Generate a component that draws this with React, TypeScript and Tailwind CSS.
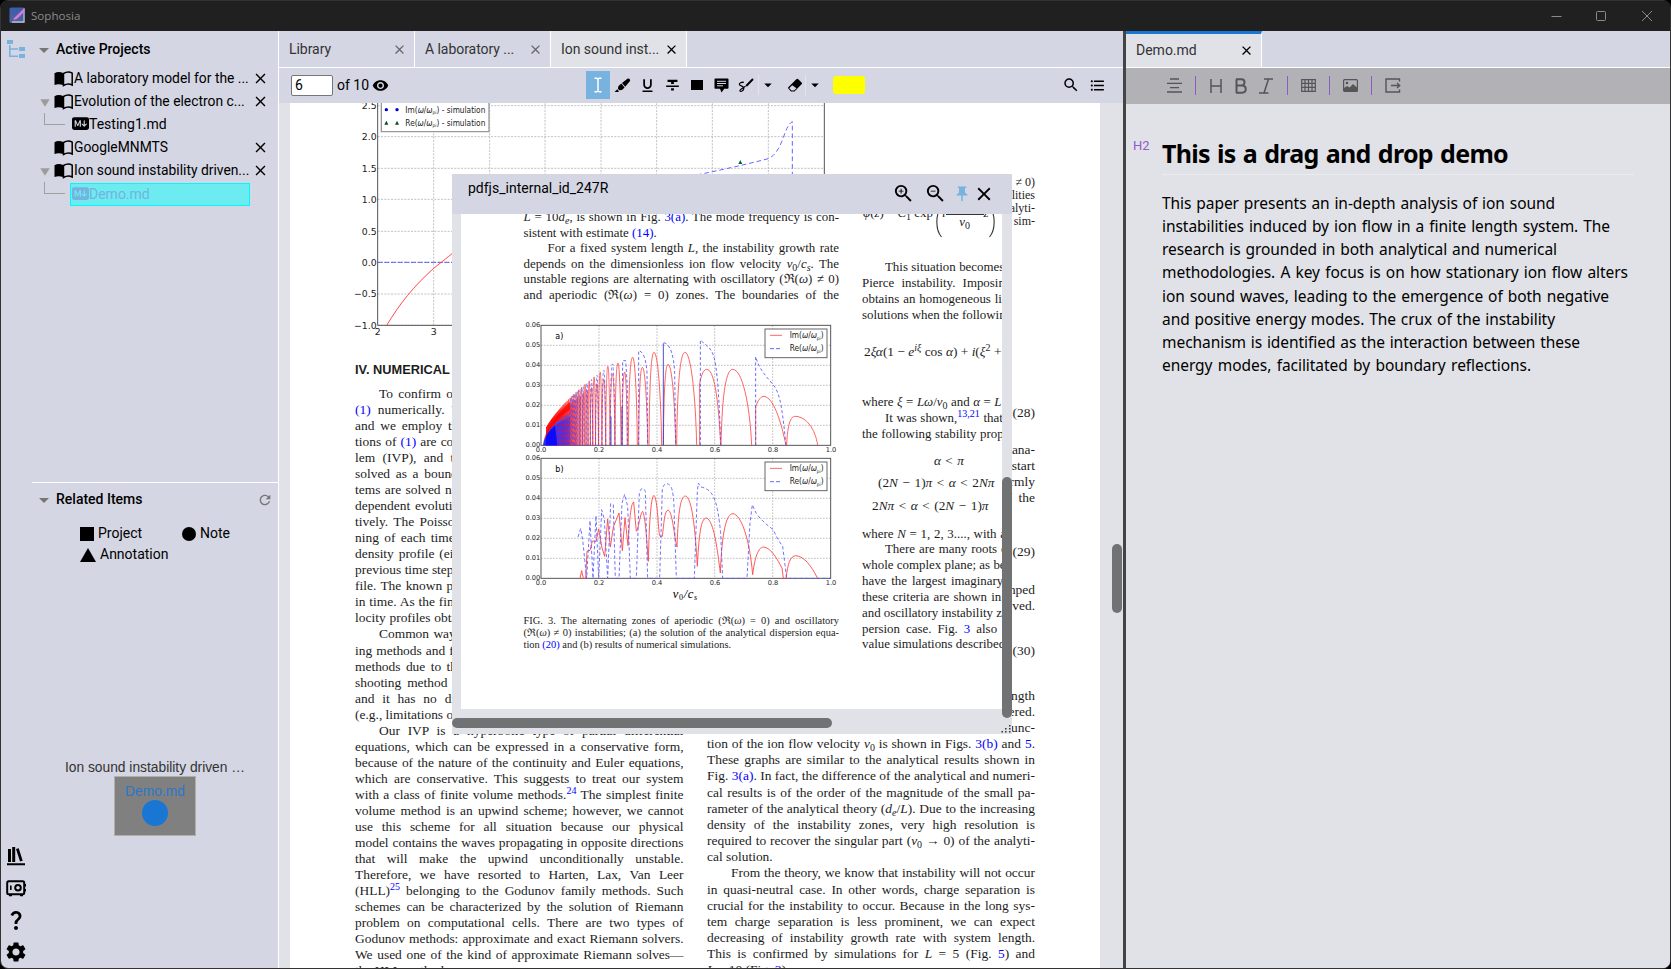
import React from "react";
import { BsMarkdownFill } from "react-icons/bs";
import {
  MdArrowDropDown,
  MdClose,
  MdFormatListBulleted,
  MdFormatStrikethrough,
  MdFormatUnderlined,
  MdPushPin,
  MdQuestionMark,
  MdRefresh,
  MdSearch,
  MdSettings,
  MdVisibility,
  MdZoomIn,
  MdZoomOut,
} from "react-icons/md";

type Kids = { children?: React.ReactNode };

/* ---------- icons ---------- */

const TreeIcon = () => (
  <svg width="20" height="20" viewBox="0 0 20 20" className="text-[#78b2de]" fill="currentColor">
    <path d="M1 1h6v4H1zM13 8h6v4h-6zM13 15h6v4h-6zM3 6h1.6v3.2H12v1.6H4.600v5.600H12V18H3z" />
  </svg>
);

const BookIcon = () => (
  <svg width="19" height="16" viewBox="0 0 19 16" className="shrink-0">
    <path d="M.5 2.200C3 .6 6.500.6 9.500 2.200v12C6.500 12.900 3 12.900.500 14z" fill="#000" />
    <path d="M9.500 2.500c3-1.700 6.300-1.700 8.700-.3V14c-2.400-1.200-5.700-1.200-8.700.5z" fill="none" stroke="#000" strokeWidth="1.500" />
  </svg>
);

const LibraryIcon = () => (
  <svg width="20" height="20" viewBox="0 0 20 20">
    <path d="M2 3h3v13H2zM6.200 1h3v15h-3zM10 3l2.700-.8 4 12.600-2.700.8zM1 17.200h18v2H1z" fill="#000" />
  </svg>
);

const SafeIcon = () => (
  <svg width="20" height="17" viewBox="0 0 20 17" fill="none" stroke="#000" strokeWidth="2">
    <rect x="1.200" y="1.200" width="17" height="13" rx="1.500" />
    <circle cx="12" cy="7.700" r="2.800" />
    <path d="M4.800 5.500v4.500" strokeWidth="1.600" />
    <path d="M3 15.500h3M14 15.500h3M19.500 4v2.500M19.500 9v2.500" strokeWidth="1.500" />
  </svg>
);

const CaretIcon = () => (
  <svg width="8" height="16" viewBox="0 0 8 16" fill="none" stroke="#fff" strokeWidth="1.500">
    <path d="M.5 1.200h2.300L4 2l1.200-.8h2.300M4 2v12M.5 14.800h2.300L4 14l1.200.8h2.300" />
  </svg>
);

const MarkerIcon = () => (
  <svg width="17" height="15" viewBox="0 0 17 15">
    <path d="M13.700.600 8 5 11.200 8.800 16 3c.7-1.300-1-3-2.300-2.400zM7.300 5.600 4.300 8.300 4 10.800l1.300 1.500L8 12l2.600-2.600zM3.300 11.300.5 14h3.700l.7-.8z" fill="#000" />
  </svg>
);

const CommentIcon = () => (
  <svg width="15" height="15" viewBox="0 0 15 15">
    <path d="M1.500.5h12c.6 0 1 .4 1 1v8.300c0 .6-.4 1-1 1H10.300L7.500 14.500 6 10.800H1.500c-.6 0-1-.4-1-1V1.500c0-.6.4-1 1-1z" fill="#000" />
    <path d="M3 3.300h9M3 5.500h9M3 7.800h6" stroke="#d4d6e3" />
  </svg>
);

const DrawIcon = () => (
  <svg width="16" height="15" viewBox="0 0 16 15" fill="none" stroke="#000">
    <path d="M15 1 8.200 8" strokeWidth="2" />
    <path d="M5.800 4.300C3.500 4 .8 5 1.500 6.700c.6 1.400 4.300 1.300 4.300 3.600C5.800 12.800 2.500 14.300 2 12.800c-.4-1.400 2.300-2.300 5.500-4.500" strokeWidth="1.300" />
  </svg>
);

const EraserIcon = () => (
  <svg width="16" height="15" viewBox="0 0 16 15">
    <path d="M9.600 1 1.300 9.200a1 1 0 0 0 0 1.400L4 13.500h3.500l7.300-7.400a1 1 0 0 0 0-1.400L11 1a1 1 0 0 0-1.400 0z" fill="#000" />
    <path d="M5.200 7.300 2.200 10.200l2.400 2.400H7l2.500-2.400z" fill="#d4d6e3" />
  </svg>
);

const AppLogo = () => (
  <svg width="17" height="17" viewBox="0 0 17 17">
    <defs>
      <linearGradient id="logo" x1="0" y1="0" x2="0" y2="1">
        <stop offset="0" stopColor="#3a5cab" />
        <stop offset="1" stopColor="#56639a" />
      </linearGradient>
    </defs>
    <rect x=".5" y=".5" width="15" height="15.500" rx="1.500" fill="url(#logo)" />
    <path d="M15 1.500v13.500H3" stroke="#b9bcd6" strokeWidth="1.300" fill="none" />
    <path d="M15.500 1 4.500 11.500 5 13l3.500-1.500L15 5z" fill="#cf7fd8" />
  </svg>
);

/* ---------- left side ---------- */

const Rail = () => (
  <nav className="flex w-[31px] shrink-0 flex-col items-center justify-between pr-px pt-[8px]">
    <TreeIcon />
    <div className="flex flex-col items-center">
      <div className="flex h-8 items-center"><LibraryIcon /></div>
      <div className="flex h-8 items-center"><SafeIcon /></div>
      <div className="flex h-8 items-center"><MdQuestionMark size={24} /></div>
      <div className="flex h-8 items-center"><MdSettings size={24} /></div>
    </div>
  </nav>
);

const PanelTitle = ({ children, right }: Kids & { right?: React.ReactNode }) => (
  <div className="flex h-[35px] items-center pr-[5px]">
    <span className="flex w-6 justify-center text-[#757575]"><MdArrowDropDown size={24} className="shrink-0" /></span>
    <span className="flex-1 text-[14px] font-medium text-black">{children}</span>
    {right}
  </div>
);

const ProjectRow = ({ label, open }: { label: string; open?: boolean }) => (
  <div className="flex h-[23px] items-center pl-[8px]">
    <span className="w-[14px] shrink-0">
      {open && (
        <svg width="10" height="8" viewBox="0 0 10 8" className="mt-[3px]"><path d="M.3.300h9.400L5 7.800z" fill="#9c9c9c" /></svg>
      )}
    </span>
    <BookIcon />
    <span className="w-[176px] shrink-0 whitespace-nowrap pl-[1px] text-[13.850px]">{label}</span>
    <span className="ml-[3px]"><MdClose size={17} /></span>
  </div>
);

const NoteRow = ({ label, active }: { label: string; active?: boolean }) => (
  <div className="flex h-[23px] pl-3">
    <span className="h-3 w-[21px] border-b border-l border-[#a0a0a0]" />
    <span
      className={
        active
          ? "ml-[5px] mt-[1px] flex h-[23px] w-[180px] items-center border border-[#00f8ff] bg-[#6cecf1] pl-[1px] text-[#75b2de]"
          : "ml-[5px] flex w-[180px] items-center pl-[2px]"
      }
    >
      <BsMarkdownFill size={17} className="mb-[2px]" />
      <span className="text-[14px]">{label}</span>
    </span>
  </div>
);

const Sidebar = () => (
  <aside className="flex w-[246px] shrink-0 flex-col text-black">
    <section className="flex h-[451px] flex-col pt-[1px]">
      <PanelTitle>Active Projects</PanelTitle>
      <ProjectRow label="A laboratory model for the ..." />
      <ProjectRow open label="Evolution of the electron c..." />
      <NoteRow label="Testing1.md" />
      <ProjectRow label="GoogleMNMTS" />
      <ProjectRow open label="Ion sound instability driven..." />
      <NoteRow active label="Demo.md" />
    </section>
    <section className="flex flex-1 flex-col border-t border-white">
      <div className="-mt-px"><PanelTitle right={<MdRefresh size={16} className="text-[#757575]" />}>Related Items</PanelTitle></div>
      <div className="grid grid-cols-[102px_1fr] gap-y-[1px] pl-12 pt-[6px] text-[14px] leading-5">
        <span className="flex items-center gap-1">
          <span className="mt-[2px] h-[14px] w-[14px] bg-black" />Project
        </span>
        <span className="flex items-center gap-1">
          <span className="mt-[2px] h-[14px] w-[14px] rounded-full bg-black" />Note
        </span>
        <span className="flex items-center gap-1">
          <svg width="16" height="14" viewBox="0 0 16 14" className="mt-[2px]"><path d="M8 0l8 14H0z" /></svg>
          Annotation
        </span>
      </div>
      <div className="flex flex-col items-center pt-[195px] font-['Liberation_Sans',sans-serif] text-[13.800px] leading-[18px] text-[#333]">
        <span className="whitespace-nowrap">Ion sound instability driven …</span>
        <div className="-mt-px flex h-[60px] w-[82px] flex-col items-center border border-[#b0b0aa] bg-[#808080] pt-[6px] text-[#2a77c9]">
          <span className="leading-[17px]">Demo.md</span>
          <span className="h-[26px] w-[26px] rounded-full bg-[#1976d2]" />
        </div>
      </div>
    </section>
  </aside>
);

/* ---------- document text ---------- */

const J = ({ children, indent }: Kids & { indent?: boolean }) => (
  <div className={indent ? "whitespace-nowrap pl-6 [text-align-last:justify]" : "whitespace-nowrap [text-align-last:justify]"}>{children}</div>
);
const L = ({ children, ws }: Kids & { ws?: number }) => (
  <div className="whitespace-nowrap" style={ws ? { wordSpacing: ws } : undefined}>{children}</div>
);
const R = ({ children }: Kids) => <div className="whitespace-nowrap text-right">{children}</div>;
const A = ({ children }: Kids) => <span className="text-[#0000ff]">{children}</span>;
const Sup = ({ children }: Kids) => <span className="relative -top-[5px] text-[10px] leading-none">{children}</span>;
const Sub = ({ children }: Kids) => <span className="relative top-[3px] text-[10px] leading-none">{children}</span>;

/* growth-rate plot at the top of the page */
const TopPlot = () => {
  const gx = [491, 659, 825, 993, 1160, 1327, 1495];
  const gy: [number, string][] = [[257, "2.5"], [350, "2.0"], [445, "1.5"], [538, "1.0"], [634, "0.5"], [727, "0.0"], [822, "−0.5"], [916, "−1.0"]];
  return (
    <svg width="480" height="236" viewBox="240 249 1440 708" className="block shrink-0 font-['DejaVu_Sans',sans-serif]">
      <g stroke="#b4b4b4" strokeWidth="2.500" strokeDasharray="6 4">
        {gx.map((x) => <path key={x} d={`M${x} 200V916`} />)}
        {gy.map(([y]) => <path key={y} d={`M323 ${y}H1663`} />)}
      </g>
      <path d="M323 200V916H1663V200" fill="none" stroke="#555" strokeWidth="3" />
      <path d="M323 727H900" stroke="#4444ee" strokeWidth="2.500" strokeDasharray="15 5" />
      <path d="M350 916C390 850 430 800 491 745C520 722 535 710 560 690" fill="none" stroke="#ff4a4a" strokeWidth="3" />
      <path d="M1280 465C1400 440 1440 430 1495 416C1540 395 1540 320 1567 305V465" fill="none" stroke="#6666ff" strokeWidth="3" strokeDasharray="14 9" />
      <path d="M1411 420l-6 12h12z" fill="#063" />
      <g fontSize="28" fill="#222" textAnchor="end">
        {gy.map(([y, t]) => <text key={t} x="320" y={y + 10}>{t}</text>)}
      </g>
      <g fontSize="28" fill="#222" textAnchor="middle">
        <text x="323" y="944">2</text>
        <text x="491" y="944">3</text>
      </g>
      <path d="M334 200V335H657V200" fill="#fff" stroke="#999" strokeWidth="4" />
      <g fill="#0000cc"><circle cx="349" cy="269" r="5" /><circle cx="381" cy="269" r="5" /></g>
      <g fill="#005020"><path d="M349 302l-6 12h12zM381 302l-6 12h12z" /></g>
      <g fontSize="24" fill="#222">
        <text x="406" y="278" textLength="240" lengthAdjust="spacingAndGlyphs">Im(<tspan fontStyle="italic">ω</tspan>/<tspan fontStyle="italic">ω</tspan><tspan fontSize="14" dy="5">pi</tspan><tspan dy="-5">) - simulation</tspan></text>
        <text x="406" y="317" textLength="240" lengthAdjust="spacingAndGlyphs">Re(<tspan fontStyle="italic">ω</tspan>/<tspan fontStyle="italic">ω</tspan><tspan fontSize="14" dy="5">pi</tspan><tspan dy="-5">) - simulation</tspan></text>
      </g>
    </svg>
  );
};

const leftColumn = (
  <div className="w-[328.500px]">
    <div className="mb-[8px] whitespace-nowrap font-['Liberation_Sans',sans-serif] text-[12.800px] font-bold leading-[16px]">IV. NUMERICAL SIMULATIONS</div>
    <L ws={2}><span className="pl-6">To confirm our results</span></L>
    <L ws={3.800}><A>(1)</A> numerically. We</L>
    <L ws={2.500}>and we employ the</L>
    <L ws={0.700}>tions of <A>(1)</A> are conver</L>
    <L ws={4}>lem (IVP), and then</L>
    <L ws={2.300}>solved as a boundary</L>
    <L ws={1}>tems are solved numer</L>
    <L ws={1.500}>dependent evolution</L>
    <L ws={2}>tively. The Poisson</L>
    <L ws={2}>ning of each time step</L>
    <L ws={1.500}>density profile (either</L>
    <L ws={0}>previous time step</L>
    <L ws={1}>file. The known pro</L>
    <L ws={0.500}>in time. As the final</L>
    <L ws={0.500}>locity profiles obtain</L>
    <L ws={1}><span className="pl-6">Common ways of</span></L>
    <L ws={0.700}>ing methods and fin</L>
    <L ws={2}>methods due to the</L>
    <L ws={2.500}>shooting method is</L>
    <L ws={4.500}>and it has no difficul</L>
    <L ws={0}>(e.g., limitations on</L>
    <J indent>Our IVP is a hyperbolic type of partial differential</J>
    <J>equations, which can be expressed in a conservative form,</J>
    <J>because of the nature of the continuity and Euler equations,</J>
    <J>which are conservative. This suggests to treat our system</J>
    <J>with a class of finite volume methods.<A><Sup>24</Sup></A> The simplest finite</J>
    <J>volume method is an upwind scheme; however, we cannot</J>
    <J>use this scheme for all situation because our physical</J>
    <J>model contains the waves propagating in opposite directions</J>
    <J>that will make the upwind unconditionally unstable.</J>
    <J>Therefore, we have resorted to Harten, Lax, Van Leer</J>
    <J>(HLL)<A><Sup>25</Sup></A> belonging to the Godunov family methods. Such</J>
    <J>schemes can be characterized by the solution of Riemann</J>
    <J>problem on computational cells. There are two types of</J>
    <J>Godunov methods: approximate and exact Riemann solvers.</J>
    <J>We used one of the kind of approximate Riemann solves—</J>
    <L>the HLL method.</L>
  </div>
);

const rightColumn = (
  <div className="w-[328px]">
    <div className="text-[12px] leading-[12.900px]">
      <R>≠ 0)</R>
      <R>ilities</R>
      <R>alyti-</R>
      <R>sim-</R>
    </div>
    <div className="h-[177px]" />
    <R>(28)</R>
    <div className="h-[21px]" />
    <R>ana-</R>
    <R>start</R>
    <R>rmly</R>
    <R>of&nbsp; the</R>
    <div className="h-[38px]" />
    <R>(29)</R>
    <div className="h-[22px]" />
    <R>mped</R>
    <R>ved.</R>
    <div className="h-[29px]" />
    <R>(30)</R>
    <div className="h-[29px]" />
    <R>length</R>
    <R>considered.</R>
    <R>func-</R>
    <div className="leading-[16.170px]">
      <J>tion of the ion flow velocity <i>v</i><Sub>0</Sub> is shown in Figs. <A>3(b)</A> and <A>5</A>.</J>
      <J>These graphs are similar to the analytical results shown in</J>
      <J>Fig. <A>3(a)</A>. In fact, the difference of the analytical and numeri-</J>
      <J>cal results is of the order of the magnitude of the small pa-</J>
      <J>rameter of the analytical theory (<i>d</i><Sub><i>e</i></Sub>/<i>L</i>). Due to the increasing</J>
      <J>density of the instability zones, very high resolution is</J>
      <J>required to recover the singular part (<i>v</i><Sub>0</Sub> → 0) of the analyti-</J>
      <L>cal solution.</L>
      <J indent>From the theory, we know that instability will not occur</J>
      <J>in quasi-neutral case. In other words, charge separation is</J>
      <J>crucial for the instability to occur. Because in the long sys-</J>
      <J>tem charge separation is less prominent, we can expect</J>
      <J>decreasing of instability growth rate with system length.</J>
      <J>This is confirmed by simulations for <i>L</i> = 5 (Fig. <A>5</A>) and</J>
      <L><i>L</i> = 10 (Fig. <A>3</A>).</L>
    </div>
  </div>
);

const PdfPage = () => (
  <div className="flex h-full w-[810px] flex-col overflow-hidden bg-white font-['Liberation_Serif',serif] text-[13.450px] leading-[16.030px] text-[#1c1c1c]">
    <div className="flex h-full">
      <div className="w-[394px] shrink-0 pl-[60px]">
        <TopPlot />
        <div className="h-[23px]" />
        <div className="pl-[5px]">{leftColumn}</div>
      </div>
      <div className="pl-[23px] pt-[73px]">{rightColumn}</div>
    </div>
  </div>
);

/* ---------- reference preview ---------- */

type Lobe = [number, number, number, number];

const lobePath = ([s, p, top, e]: Lobe) => {
  const h = 736 - top;
  return `M${s} 736C${s + (p - s) * 0.1} ${736 - h * 0.75} ${p - (p - s) * 0.5} ${top} ${p} ${top}C${p + (e - p) * 0.5} ${top} ${e - (e - p) * 0.1} ${736 - h * 0.55} ${e} 736`;
};

const bigLobes: Lobe[] = [
  [830, 855, 649, 923],
  [633, 668, 508, 725],
  [500, 525, 457, 560],
  [460, 474, 493, 497],
  [417, 432, 457, 455],
  [386, 397, 502, 413],
  [355, 368, 472, 382],
  [336, 344, 516, 352],
  [315, 324, 489, 333],
];

const buildSmallLobes = () => {
  const red: Lobe[] = [];
  const blue: Lobe[] = [];
  const toX = (inv: number) => 93 + 869 / inv;
  let inv = 3.92;
  let even = true;
  while (inv < 50) {
    const e = toX(inv);
    const s = toX(inv + 0.27);
    const v = 1 / inv;
    const height = 560 * Math.pow(v, 0.6);
    const top = 736 - height * (even ? 0.87 : 1.0);
    red.push([s, (s + e) / 2, top, e]);
    if (even) blue.push([s, (s + e) / 2, 736 - height * (v > 0.1 ? 0.99 : 0.7), e]);
    inv += 0.28;
    even = !even;
  }
  return { red, blue };
};

const small = buildSmallLobes();

const PlotFrame = ({ letter }: { letter: string }) => (
  <>
    <g stroke="#b4b4b4" strokeWidth="2.500" strokeDasharray="5 4">
      {[267, 441, 614, 788].map((x) => <path key={x} d={`M${x} 376V736`} />)}
      {[436, 496, 556, 616, 676].map((y) => <path key={y} d={`M93 ${y}H962`} />)}
    </g>
    <rect x="93" y="376" width="869" height="360" fill="none" stroke="#555" strokeWidth="3" />
    <g fontSize="20" fill="#222" textAnchor="end">
      {["0.06", "0.05", "0.04", "0.03", "0.02", "0.01", "0.00"].map((t, i) => <text key={t} x="91" y={382 + i * 60}>{t}</text>)}
    </g>
    <g fontSize="20" fill="#222" textAnchor="middle">
      {["0.0", "0.2", "0.4", "0.6", "0.8", "1.0"].map((t, i) => <text key={t} x={93 + i * 174} y="757">{t}</text>)}
    </g>
    <text x="136" y="416" fontSize="24">{letter}</text>
  </>
);

const PlotLegend = () => (
  <>
    <rect x="765" y="387" width="186" height="86" fill="#fff" stroke="#666" strokeWidth="3" />
    <path d="M780 406h36" stroke="#ff6a6a" strokeWidth="3" />
    <path d="M780 446h36" stroke="#6a6aff" strokeWidth="3" strokeDasharray="12 6" />
    <g fontSize="24" fill="#222">
      <text x="839" y="415" textLength="102" lengthAdjust="spacingAndGlyphs">Im(<tspan fontStyle="italic">ω</tspan>/<tspan fontStyle="italic">ω</tspan><tspan fontSize="14" dy="5">pi</tspan><tspan dy="-5">)</tspan></text>
      <text x="839" y="454" textLength="102" lengthAdjust="spacingAndGlyphs">Re(<tspan fontStyle="italic">ω</tspan>/<tspan fontStyle="italic">ω</tspan><tspan fontSize="14" dy="5">pi</tspan><tspan dy="-5">)</tspan></text>
    </g>
  </>
);

const Figure3 = () => (
  <svg width="322" height="288" viewBox="39 360 966 864" className="-ml-px block font-['DejaVu_Sans',sans-serif]">
    <PlotFrame letter="a)" />
    <g fill="none" stroke="#ff4a4a" strokeWidth="2.600">
      {bigLobes.map((l) => <path key={l[0]} d={lobePath(l)} />)}
      <path d="M737 736V620C745 598 753 589 762 589C790 592 812 660 828 736" />
      <path d="M569 736V550C575 520 582 508 590 508C612 508 625 590 632 736" />
    </g>
    <g fill="none" stroke="#ff1a1a" strokeOpacity="0.7" strokeWidth="2.600">
      {small.red.map((l) => <path key={l[0]} d={lobePath(l)} />)}
    </g>
    <g fill="none" stroke="#4a4aff" strokeWidth="2.500" strokeDasharray="9 7">
      <path d="M737 736V470C748 510 770 530 790 555C812 580 818 640 828 736" />
      <path d="M571 736V420C590 438 600 440 610 465C622 500 628 600 632 736" />
      <path d="M386 736V452C398 455 408 470 411 520L413 736" />
      <path d="M336 736L338 482H347L352 560V736" />
      <path d="M461 428C482 432 492 470 494 520L497 736" />
      {small.blue.map((l) => <path key={l[0]} d={lobePath(l)} strokeOpacity="0.8" />)}
    </g>
    <path d="M336 736V620M303 736V650M460 736V430" stroke="#3333cc" strokeWidth="2.600" />
    <path d="M101 736C102 710 125 685 150 665L180 650V736z" fill="#0000ff" fillOpacity="0.25" />
    <path d="M99 736C100 715 115 695 135 676L142 736z" fill="#0000ff" fillOpacity="0.8" />
    <path d="M101 722C108 690 135 645 180 605L180 630C150 646 120 685 101 722z" fill="#ff0000" fillOpacity="0.75" />
    <PlotLegend />
    <g transform="translate(0 399)">
      <PlotFrame letter="b)" />
      <PlotLegend />
    </g>
    <g transform="translate(0 749)" fill="none" strokeWidth="2.600">
      <path stroke="#ff4040" d="M210 386L215 363L220 386H227L231 305L240 302L247 274L258 275L266 238L276 295L284 320L293 208L301 292L310 232L327 190L337 303L345 204L354 288C358 220 362 160 371 157L379 245C386 240 390 190 398 185C406 200 409 260 415 335C418 200 424 140 432 137C444 150 444 250 450 260H457C462 220 463 185 474 181C488 185 492 260 501 292C505 180 512 140 526 139C546 142 556 240 562 350C568 230 576 205 590 205C612 215 622 300 631 370C636 240 650 192 669 192C692 195 718 260 728 375C736 310 748 292 762 292C786 297 802 330 816 355L820 386H828C834 340 840 320 857 318C884 320 904 350 923 386" />
      <path stroke="#5a5aff" strokeDasharray="10 7" d="M204 262L212 236L218 270L230 386L240 213L249 386L258 198L266 386L275 180L283 210L293 386L302 162L310 165L316 386H327L336 160L344 134L353 170L361 386H379L388 130Q396 105 406 125L413 386H449L457 118Q466 90 482 110Q492 125 493 200L499 386H553L562 125L565 100L572 112Q600 116 612 145Q624 170 632 250L638 386H711L720 220L727 165L738 190Q755 215 790 240Q800 265 818 290L830 386H962" />
    </g>
    <text x="488" y="1194" fontSize="38" fontStyle="italic" className="font-['Liberation_Serif',serif]" letterSpacing="2">v<tspan fontSize="24" fontStyle="normal" dy="6">0</tspan><tspan dy="-6">/c</tspan><tspan fontSize="24" dy="6">s</tspan></text>
  </svg>
);

const Preview = () => (
  <div className="absolute left-[173px] top-[71px] flex h-[560px] w-[560px] flex-col bg-[#e1e2e7]">
    <div className="flex h-10 shrink-0 items-center bg-[#d4d6e3] pb-px pl-4 pr-[19px] text-black">
      <span className="flex-1 pb-[10px] text-[14px]">pdfjs_internal_id_247R</span>
      <MdZoomIn size={23} className="mr-[9px]" />
      <MdZoomOut size={23} className="mr-[6px]" />
      <MdPushPin size={18} className="mr-[2px] text-[#78b2de]" />
      <MdClose size={22} className="-mr-[2px]" />
    </div>
    <div className="flex min-h-0 flex-1">
      <div className="mb-[25px] ml-[9px] flex w-[541px] overflow-hidden bg-white font-['Liberation_Serif',serif] text-[12.900px] leading-[15.600px] text-[#1c1c1c]">
        <div className="w-[378px] shrink-0 pl-[62.500px]">
          <div className="-mt-[4px] w-[315.500px]">
            <J><i>L</i> = 10<i>d</i><Sub><i>e</i></Sub>, is shown in Fig. <A>3(a)</A>. The mode frequency is con-</J>
            <L>sistent with estimate <A>(14)</A>.</L>
            <J indent>For a fixed system length <i>L</i>, the instability growth rate</J>
            <J>depends on the dimensionless ion flow velocity <i>v</i><Sub>0</Sub>/<i>c</i><Sub><i>s</i></Sub>. The</J>
            <J>unstable regions are alternating with oscillatory (ℜ(<i>ω</i>) ≠ 0)</J>
            <J>and aperiodic (ℜ(<i>ω</i>) = 0) zones. The boundaries of the</J>
          </div>
          <div className="pt-[16.400px]"><Figure3 /></div>
          <div className="w-[315.500px] pt-[7px] text-[10.450px] leading-[12px]">
            <J>FIG. 3. The alternating zones of aperiodic (ℜ(<i>ω</i>) = 0) and oscillatory</J>
            <J>(ℜ(<i>ω</i>) ≠ 0) instabilities; (a) the solution of the analytical dispersion equa-</J>
            <L>tion <A>(20)</A> and (b) results of numerical simulations.</L>
          </div>
        </div>
        <div className="pl-[23px] leading-[15.850px]">
          <div className="-mt-[8px] flex h-[54px] items-start">
            <span className="pl-px pr-[2px]"><i>φ</i>(<i>z</i>) = <i>C</i><Sub>1</Sub> exp</span>
            <svg width="7" height="32" viewBox="0 0 7 32" fill="none" stroke="#333" strokeWidth="1.100"><path d="M6.500 1C.3 8 .3 24 6.500 31" /></svg>
            <i>i</i>
            <span className="flex w-[38px] flex-col items-center">
              <span className="mt-[8px] h-px w-full bg-[#333]" />
              <span><i>v</i><Sub>0</Sub></span>
            </span>
            <i>z</i>
            <svg width="7" height="32" viewBox="0 0 7 32" fill="none" stroke="#333" strokeWidth="1.100"><path d="M.5 1C6.700 8 6.700 24 .5 31" /></svg>
          </div>
          <L ws={0.200}><span className="pl-[23px]">This situation becomes the</span></L>
          <L ws={4}>Pierce instability. Imposing</L>
          <L ws={0.700}>obtains an homogeneous linear</L>
          <L ws={0}>solutions when the following</L>
          <div className="h-[21px]" />
          <L><span className="pl-[2px] text-[13.400px]">2<i>ξα</i>(1 − <i>e</i><Sup><i>iξ</i></Sup> cos <i>α</i>) + <i>i</i>(<i>ξ</i><Sup>2</Sup> + <i>α</i></span></L>
          <div className="h-[34px]" />
          <L ws={0.300}>where <i>ξ</i> = <i>Lω</i>/<i>v</i><Sub>0</Sub> and <i>α</i> = <i>L</i></L>
          <L ws={0.500}><span className="pl-[23px]">It was shown,<A><Sup>13,21</Sup></A> that for</span></L>
          <L ws={0.300}>the following stability property</L>
          <div className="h-[7px]" />
          <div className="flex flex-col text-[13.300px] leading-[22.600px]">
            <L ws={1}><span className="pl-[72px]"><i>α</i> &lt; <i>π</i></span></L>
            <L ws={1.200}><span className="pl-[16px]">(2<i>N</i> − 1)<i>π</i> &lt; <i>α</i> &lt; 2<i>Nπ</i></span></L>
            <L ws={1.200}><span className="pl-[10px]">2<i>Nπ</i> &lt; <i>α</i> &lt; (2<i>N</i> − 1)<i>π</i></span></L>
          </div>
          <div className="h-[9px]" />
          <L ws={0.500}>where <i>N</i> = 1, 2, 3...., with alpha</L>
          <L ws={0.700}><span className="pl-[23px]">There are many roots of the</span></L>
          <L ws={0.100}>whole complex plane; as before</L>
          <L ws={1.700}>have the largest imaginary part</L>
          <L ws={1}>these criteria are shown in Fig</L>
          <L ws={0}>and oscillatory instability zones</L>
          <L ws={2.800}>persion case. Fig. <A>3</A> also shows</L>
          <L>value simulations described</L>
        </div>
      </div>
      <div className="w-[10px] pt-[263px]">
        <div className="h-[241px] rounded-full bg-[#717274]" />
      </div>
    </div>
    <div className="absolute bottom-[6px] left-0 h-[10px] w-[380px] rounded-full bg-[#717274]" />
    <svg width="11" height="8" viewBox="0 0 11 8" className="absolute bottom-[1px] right-0">
      <path d="M.5 6H2v1.500H.5zM4 6h1.500v1.500H4zM8 6h1.500v1.500H8zM4 3h1.500v1.500H4zM8 3h1.500v1.500H8zM8 0h1.500v1.500H8z" fill="#333" />
    </svg>
  </div>
);

/* ---------- centre pane ---------- */

const Tab = ({ label, active }: { label: string; active?: boolean }) => (
  <div className={active
    ? "flex w-[136px] items-center justify-between border-r border-white bg-[#e1e2e7] pl-[10px] pr-[7px] text-[#333]"
    : "flex w-[136px] items-center justify-between border-r border-white pl-[10px] pr-[7px] text-[#333]"}>
    <span className="whitespace-nowrap pt-px text-[14px] tracking-[-0.050px]">{label}</span>
    <MdClose size={15} className={active ? "text-black" : "text-[#666]"} />
  </div>
);

const Center = () => (
  <main className="flex w-[845px] shrink-0 flex-col border-l border-white">
    <div className="flex h-[37px] shrink-0 border-b border-white">
      <Tab label="Library" />
      <Tab label="A laboratory ..." />
      <Tab active label="Ion sound inst..." />
    </div>
    <div className="flex h-[35px] shrink-0 items-center pb-px pr-[17px] text-black">
      <div className="flex w-[307px] items-center pl-3">
        <span className="flex h-[21px] w-[42px] items-center rounded-[2px] border border-[#767676] bg-white pl-[3px] text-[14px]">6</span>
        <span className="pl-1 pr-[3px] text-[14px]">of 10</span>
        <MdVisibility size={17} />
      </div>
      <span className="flex h-7 w-6 items-center justify-center bg-[#78b2de]"><CaretIcon /></span>
      <span className="flex w-[25px] justify-center"><MarkerIcon /></span>
      <span className="flex w-[25px] justify-center"><MdFormatUnderlined size={17} /></span>
      <span className="flex w-[24px] justify-center"><MdFormatStrikethrough size={17} /></span>
      <span className="flex w-[25px] justify-center"><span className="h-[10px] w-3 bg-black" /></span>
      <span className="flex w-[25px] justify-center"><CommentIcon /></span>
      <span className="flex w-[24px] justify-center"><DrawIcon /></span>
      <span className="flex h-5 w-[19px] items-center justify-center border-l border-[#e3e4ec]"><MdArrowDropDown size={18} /></span>
      <span className="ml-[7px] flex w-[21px] justify-center"><EraserIcon /></span>
      <span className="flex h-5 w-[19px] items-center justify-center border-l border-[#e3e4ec]"><MdArrowDropDown size={18} /></span>
      <span className="ml-[9px] h-[18px] w-8 rounded-[3px] bg-[#ffff00]" />
      <span className="flex-1" />
      <MdSearch size={18} className="mr-[9px]" />
      <MdFormatListBulleted size={17} />
    </div>
    <div className="relative min-h-0 flex-1 bg-[#e1e2e7] pl-[11px]">
      <PdfPage />
      <Preview />
      <div className="absolute right-px top-[441px] h-[69px] w-[10px] rounded-full bg-[#717274]" />
    </div>
  </main>
);

/* ---------- editor ---------- */

const note: [string, string][] = [
  ["This paper presents an in-depth analysis of ion sound", "w-[393px]"],
  ["instabilities induced by ion flow in a finite length system. The", "w-[448px]"],
  ["research is grounded in both analytical and numerical", "w-[395px]"],
  ["methodologies. A key focus is on how stationary ion flow alters", "w-[466px]"],
  ["ion sound waves, leading to the emergence of both negative", "w-[447px]"],
  ["and positive energy modes. The crux of the instability", "w-[393px]"],
  ["mechanism is identified as the interaction between these", "w-[418px]"],
  ["energy modes, facilitated by boundary reflections.", "w-[369px]"],
];

const Sep = () => <span className="h-[19px] w-px bg-[#8b5cc9]" />;

const EditorBar = () => (
  <div className="flex h-9 shrink-0 items-center bg-[#b2b1b6] pb-px pl-[41px] text-[#555]">
    <svg width="15" height="15" viewBox="0 0 15 15" stroke="currentColor" strokeWidth="1.300"><path d="M3 1h9M0 5.300h15M3 9.600h9M0 14h15" /></svg>
    <span className="ml-[13px] flex"><Sep /></span>
    <svg width="12" height="16" viewBox="0 0 12 16" className="ml-[14px]" fill="none" stroke="currentColor" strokeWidth="1.500"><path d="M1 1v14M11 1v14M1 8h10" /></svg>
    <svg width="12" height="16" viewBox="0 0 12 16" className="ml-[13px]" fill="none" stroke="currentColor" strokeWidth="2"><path d="M1.500 1.200v13.500M1 1.200h5.500c4 0 4 6.300 0 6.300H1.500h5.500c5 0 5 7.200 0 7.200H1" /></svg>
    <svg width="14" height="16" viewBox="0 0 14 16" className="ml-[12px]" fill="none" stroke="currentColor" strokeWidth="1.500"><path d="M5 1h9M9.500 1 5 15M0 15h9.500" /></svg>
    <span className="ml-[14px] flex"><Sep /></span>
    <svg width="15" height="13" viewBox="0 0 15 13" className="ml-[13px]" fill="none" stroke="currentColor"><path d="M.7.700h13.600v11.600H.7zM.7 4.300h13.600M.7 8.300h13.600M4 .700v11.600M7.500.700v11.600M11 .700v11.600" strokeWidth="1.200" /></svg>
    <span className="ml-[13px] flex"><Sep /></span>
    <svg width="15" height="13" viewBox="0 0 15 13" className="ml-[13px]"><rect x=".6" y=".6" width="13.800" height="11.800" rx="1" fill="none" stroke="currentColor" strokeWidth="1.200" /><circle cx="4" cy="4" r="1.300" fill="currentColor" /><path d="M1 11V9l3-2 2.500 1.500L10 5l4 3.500V12H1z" fill="currentColor" /></svg>
    <span className="ml-[13px] flex"><Sep /></span>
    <svg width="16" height="15" viewBox="0 0 16 15" className="ml-[13px]" fill="none" stroke="currentColor" strokeWidth="1.400"><path d="M14.500 3.500V1H1v13h13.500v-2.500M6 7.500h8.500M12 5l2.700 2.500L12 10" /></svg>
  </div>
);

const Editor = () => (
  <section className="flex min-w-0 flex-1 flex-col">
    <div className="flex h-[37px] shrink-0 border-b border-white">
      <div className="flex w-[136px] items-center justify-between border-r border-t-[3px] border-r-white border-t-[#1976d2] bg-[#e1e2e7] pl-[10px] pr-[7px] text-[#333]">
        <span className="text-[14px]">Demo.md</span>
        <MdClose size={15} className="text-black" />
      </div>
    </div>
    <EditorBar />
    <div className="flex flex-1 bg-[#e1e2e7] pl-[7px] pt-[33px] text-black">
      <span className="w-[29px] pt-[1px] text-[13px] leading-[15px] text-[#8f5bc9]">H2</span>
      <div className="w-[472px]">
        <h2 className="h-[38px] w-full border-b border-[#eaebf0] font-['Noto_Sans',sans-serif] text-[25px] font-bold leading-[32px]">
          <span className="block w-[346px] whitespace-nowrap tracking-[-0.700px] [text-align-last:justify]">This is a drag and drop demo</span>
        </h2>
        <div className="pt-[17px] font-['Noto_Sans',sans-serif] text-[15.500px] leading-[23.150px] tracking-[-0.050px]">
          {note.map(([text, width]) => (
            <div key={text} className={`${width} whitespace-nowrap [text-align-last:justify]`}>{text}</div>
          ))}
        </div>
      </div>
    </div>
  </section>
);

/* ---------- window ---------- */

const TitleBar = () => (
  <header className="flex h-[30px] shrink-0 items-center bg-[#202020] pb-px pl-[8px] pr-[17px] text-[#8a8a8a]">
    <AppLogo />
    <span className="flex-1 pl-[5px] font-['Open_Sans',sans-serif] text-[11.600px]">Sophosia</span>
    <svg width="102" height="12" viewBox="0 0 102 12" fill="none" stroke="currentColor">
      <path d="M.5 6.500h10M91 1l10 10M101 1 91 11" />
      <rect x="45.500" y="1.500" width="9" height="9" rx="1" />
    </svg>
  </header>
);

export default function App() {
  return (
    <div className="h-[969px] w-[1671px] overflow-hidden bg-black font-['Roboto',sans-serif]">
      <div className="flex h-full flex-col overflow-hidden rounded-lg border border-[#333]">
        <TitleBar />
        <div className="flex min-h-0 flex-1 bg-[#d4d6e3]">
          <Rail />
          <Sidebar />
          <Center />
          <div className="w-[3px] shrink-0 bg-[#444]" />
          <Editor />
        </div>
      </div>
    </div>
  );
}
